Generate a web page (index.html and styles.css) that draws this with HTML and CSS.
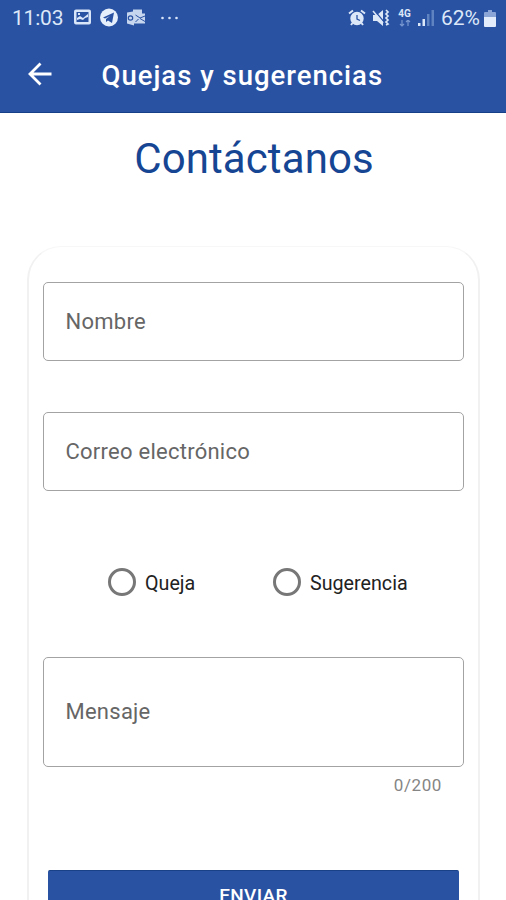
FILE: index.html
```html
<!DOCTYPE html>
<html lang="es">
<head>
<meta charset="utf-8">
<meta name="viewport" content="width=device-width">
<title>Quejas y sugerencias</title>
<link rel="stylesheet" href="styles.css">
</head>
<body>
<header class="header">
  <div class="status">
    <span class="clock">11:03</span>
    <svg class="status-left" width="110" height="22" viewBox="0 0 110 22" fill="none">
      <path fill="#d9e5f8" fill-rule="evenodd" d="M2 2.500h13q2 0 2 2v11q0 2-2 2H2q-2 0-2-2v-11q0-2 2-2zm.5 2.500v10h12V5z"/>
      <path fill="#d9e5f8" d="M3 13v-2l3-2 3 2 5-4v3l-3 1-2 2-3-1z"/><path fill="#d9e5f8" d="M4 6h2v2H4z"/>
      <circle cx="35" cy="10.500" r="9" fill="#e5eefb"/>
      <path fill="#2952a3" d="M29 10.500l11-5-2 10.500-4-2.500-2 1.500v-3l4-3-5 2.500z"/>
      <path fill="#c6d6ef" d="M59 2.500h9v4h3v10H60v2l-7-2v-11l6-1z"/>
      <circle cx="56.500" cy="11" r="2.200" stroke="#2952a3" stroke-width="1.200"/>
      <path stroke="#2952a3" stroke-width="1" d="M61.500 8l4.500 3 5-2M66 11.500l5 3M61.500 15l3-3"/>
      <g fill="#d9e5f8"><circle cx="88.500" cy="11" r="1.300"/><circle cx="95.500" cy="11" r="1.300"/><circle cx="102.500" cy="11" r="1.300"/></g>
    </svg>
    <svg class="alarm" width="18" height="18" viewBox="0 0 18 18" fill="none" stroke="#dce7f8">
      <circle cx="9" cy="9.500" r="5.700" fill="#dce7f8" stroke-width="2"/>
      <path stroke-width="2" d="M1 4.500L5 1.500M13 1.500l4 3M4.500 14L3 16M13.500 14l1.500 2"/>
      <path stroke="#2952a3" stroke-width="1.300" d="M9 6v4l3 1.500"/>
    </svg>
    <svg class="mute" width="18" height="18" viewBox="0 0 18 18" fill="none" stroke="#dce7f8">
      <path fill="#dce7f8" stroke="none" d="M1 6h4l6-5v16l-6-5H1z"/>
      <path stroke="#2952a3" stroke-width="1.300" d="M2 1l10 12"/><path stroke-width="1.500" d="M1 2l10 12"/>
      <path stroke-width="1.700" d="M14 1l2 2-2 2 2 2-2 2 2 2-2 2 2 2-2 1"/>
    </svg>
    <span class="network"><span class="network-type">4G</span>
      <svg width="12" height="7" viewBox="0 0 12 7" fill="none" stroke="#7898cf" stroke-width="1.200"><path d="M3 0v6M1 4l2 2 2-2M9 6V0M7 2l2-2 2 2"/></svg>
    </span>
    <svg class="signal" width="16" height="17" viewBox="0 0 16 17"><path fill="#dce7f8" d="M0 13h2.500v3H0zM4.500 9H7v7H4.500z"/><path fill="#5f82c0" d="M9 4h2.500v12H9zM13.500 0H16v16h-2.500z"/></svg>
    <span class="percent">62%</span>
    <svg class="battery" width="12" height="17" viewBox="0 0 12 17"><path fill="#8ba6d6" d="M4 0h4v2h3q1 0 1 1v4H0V3q0-1 1-1h3z"/><path fill="#e3ecfa" d="M0 7h12v9q0 1-1 1H1q-1 0-1-1z"/></svg>
  </div>
  <div class="appbar">
    <svg class="back" width="24" height="24" viewBox="0 0 24 24" fill="none" stroke="#fff" stroke-width="2.800"><path d="M23.500 12H2.500M12.500 1.500L2 12l10.500 10.500"/></svg>
    <h1 class="title">Quejas y sugerencias</h1>
  </div>
</header>
<main>
  <h2 class="heading">Contáctanos</h2>
  <form class="card">
    <div class="field">Nombre</div>
    <div class="field">Correo electrónico</div>
    <div class="options">
      <div class="option"><span class="radio"></span><span class="option-label">Queja</span></div>
      <div class="option"><span class="radio"></span><span class="option-label">Sugerencia</span></div>
    </div>
    <div class="field message">Mensaje</div>
    <div class="counter">0/200</div>
    <div class="submit">ENVIAR</div>
  </form>
</main>
</body>
</html>
```
FILE: styles.css
```css
* { box-sizing: border-box; }
body { margin: 0; width: 506px; height: 900px; overflow: hidden; background: #fff; font-family: Roboto, sans-serif; }
.header { height: 113px; background: #2952a3; border-bottom: 1px solid #164087; color: #fff; }
.status { height: 36px; display: flex; align-items: center; padding-left: 12px; color: #dce7f8; }
.clock { width: 62px; font-size: 21px; line-height: 36px; letter-spacing: -.2px; }
.status-left { margin-top: -1px; margin-right: 164px; }
.alarm { margin-right: 6px; }
.mute { margin-right: 7px; }
.network { width: 15px; height: 20px; margin-right: 6px; display: flex; flex-direction: column; align-items: center; }
.network-type { font-size: 10px; font-weight: 700; line-height: 12px; }
.signal { margin-right: 7px; }
.percent { width: 43px; font-size: 21px; line-height: 36px; }
.appbar { height: 76px; display: flex; align-items: center; padding-left: 28px; }
.title { margin: 4px 0 0 49.5px; font-size: 27.5px; font-weight: 500; line-height: 40px; letter-spacing: 1px; white-space: nowrap; }
.heading { margin: 17px 0 0; padding-left: 2px; text-align: center; color: #164594; font-size: 42px; font-weight: 400; line-height: 58px; letter-spacing: .1px; }
.card { height: 654px; margin: 58px 26px 0 27px; padding: 35px 14px 0 15px; border: 2px solid #f1f1f1; border-top: 1px solid #f7f7f7; border-bottom: 0; border-radius: 34px 34px 0 0; }
.field { height: 79px; margin: 0 0 51px -1px; border: 1.500px solid #a3a3a3; border-radius: 5px; padding-left: 21.5px; line-height: 77px; font-size: 22px; letter-spacing: .25px; color: #666; }
.options { height: 115px; display: flex; align-items: center; padding: 0 0 35px 64px; }
.option { display: flex; align-items: center; width: 165px; font-size: 19.7px; color: #222; }
.option-label { padding-top: 2px; }
.radio { width: 28px; height: 28px; border: 3px solid #777; border-radius: 50%; margin-right: 9px; }
.message { height: 110px; line-height: 108px; margin-bottom: 5px; }
.counter { height: 26px; line-height: 26px; padding-right: 22px; text-align: right; font-size: 17px; letter-spacing: .6px; color: #858585; }
.submit { height: 30px; margin: 72px 5px 0 4px; background: #2952a3; border-top: 1px solid #184188; border-radius: 2px 2px 0 0; color: #fff; text-align: center; font-size: 19px; font-weight: 500; line-height: 50px; letter-spacing: .3px; }
```
